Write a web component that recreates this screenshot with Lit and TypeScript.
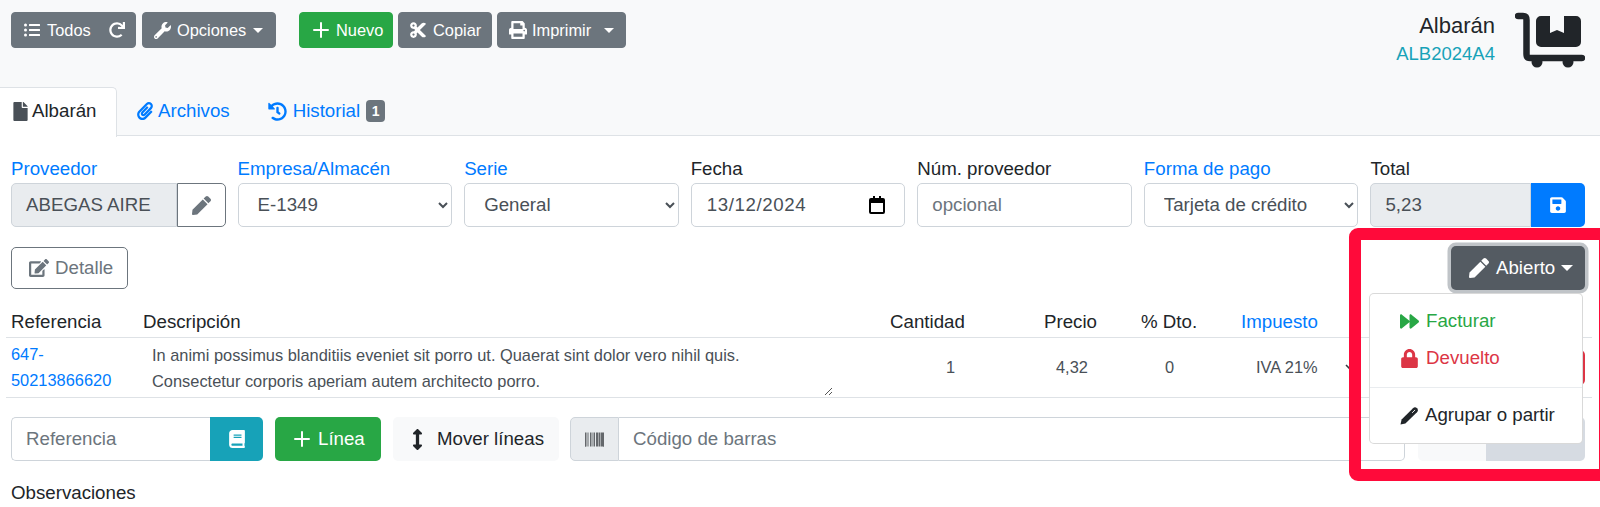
import { LitElement, html, css, svg } from "lit";
import { customElement } from "lit/decorators.js";

const P: Record<string, [number, string]> = {
  list: [512, "M48 48a48 48 0 1 0 48 48 48 48 0 0 0-48-48zm0 160a48 48 0 1 0 48 48 48 48 0 0 0-48-48zm0 160a48 48 0 1 0 48 48 48 48 0 0 0-48-48zm448 16H176a16 16 0 0 0-16 16v32a16 16 0 0 0 16 16h320a16 16 0 0 0 16-16v-32a16 16 0 0 0-16-16zm0-320H176a16 16 0 0 0-16 16v32a16 16 0 0 0 16 16h320a16 16 0 0 0 16-16V80a16 16 0 0 0-16-16zm0 160H176a16 16 0 0 0-16 16v32a16 16 0 0 0 16 16h320a16 16 0 0 0 16-16v-32a16 16 0 0 0-16-16z"],
  redo: [512, "M500.33 0h-47.41a12 12 0 0 0-12 12.57l4 82.76A247.42 247.42 0 0 0 256 8C119.34 8 8.9 119.53 8 256.19 7.1 393.07 118.1 504 256 504a247.1 247.1 0 0 0 166.18-63.91 12 12 0 0 0 .48-17.43l-34-34a12 12 0 0 0-16.38-.55A176 176 0 1 1 402.1 157.8l-101.53-4.87a12 12 0 0 0-12.57 12v47.41a12 12 0 0 0 12 12h200.33a12 12 0 0 0 12-12V12a12 12 0 0 0-12-12z"],
  wrench: [512, "M507.73 109.1c-2.24-9.03-13.54-12.09-20.12-5.51l-74.36 74.36-67.88-11.31-11.31-67.88 74.36-74.36c6.62-6.62 3.43-17.9-5.66-20.16-47.38-11.74-99.55.91-136.58 37.93-39.64 39.64-50.55 97.1-34.05 147.2L18.74 402.76c-24.99 24.99-24.99 65.51 0 90.5 24.99 24.99 65.51 24.99 90.5 0l213.21-213.21c50.12 16.71 107.47 5.68 147.37-34.22 37.07-37.07 49.7-89.32 37.91-136.73zM64 472c-13.25 0-24-10.75-24-24 0-13.26 10.75-24 24-24s24 10.74 24 24c0 13.25-10.75 24-24 24z"],
  cut: [448, "M278.06 256L444.48 89.57c4.69-4.69 4.69-12.29 0-16.97-32.8-32.8-85.99-32.8-118.79 0L210.18 188.12l-24.86-24.86c4.31-10.92 6.68-22.81 6.68-35.26 0-53.02-42.98-96-96-96S0 74.98 0 128s42.98 96 96 96c4.54 0 8.99-.32 13.36-.93L142.29 256l-32.93 32.93c-4.37-.61-8.83-.93-13.36-.93-53.02 0-96 42.98-96 96s42.98 96 96 96 96-42.98 96-96c0-12.45-2.37-24.34-6.68-35.26l24.86-24.86L325.69 439.4c32.8 32.8 85.99 32.8 118.79 0 4.69-4.68 4.69-12.28 0-16.97L278.06 256zM96 160c-17.64 0-32-14.36-32-32s14.36-32 32-32 32 14.36 32 32-14.36 32-32 32zm0 256c-17.64 0-32-14.36-32-32s14.36-32 32-32 32 14.36 32 32-14.36 32-32 32z"],
  print: [512, "M448 192V77.25c0-8.49-3.37-16.62-9.37-22.63L393.37 9.37c-6-6-14.14-9.37-22.63-9.37H96C78.33 0 64 14.33 64 32v160c-35.35 0-64 28.65-64 64v112c0 8.84 7.16 16 16 16h48v96c0 17.67 14.33 32 32 32h320c17.67 0 32-14.33 32-32v-96h48c8.84 0 16-7.16 16-16V256c0-35.35-28.65-64-64-64zm-64 256H128v-96h256v96zm0-224H128V64h192v48c0 8.84 7.16 16 16 16h48v96zm48 72c-13.25 0-24-10.75-24-24 0-13.26 10.75-24 24-24s24 10.74 24 24c0 13.25-10.75 24-24 24z"],
  file: [384, "M224 136V0H24C10.7 0 0 10.7 0 24v464c0 13.3 10.7 24 24 24h336c13.3 0 24-10.7 24-24V160H248c-13.2 0-24-10.8-24-24zm160-14.1v6.1H256V0h6.1c6.4 0 12.5 2.5 17 7l97.9 98c4.5 4.5 7 10.6 7 16.9z"],
  clip: [448, "M43.246 466.142c-58.43-60.289-57.341-157.511 1.386-217.581L254.392 34c44.316-45.332 116.351-45.336 160.671 0 43.89 44.894 43.943 117.329 0 162.276L232.214 383.128c-29.855 30.537-78.633 30.111-107.982-.998-28.275-29.97-27.368-77.473 1.452-106.953l143.743-146.835c6.182-6.314 16.312-6.422 22.626-.241l22.861 22.379c6.315 6.182 6.422 16.312.241 22.626L171.427 319.927c-4.932 5.045-5.236 13.428-.648 18.292 4.372 4.634 11.245 4.711 15.688.165l182.849-186.851c19.613-20.062 19.613-52.725-.011-72.798-19.189-19.627-49.957-19.637-69.154 0L90.39 293.295c-34.763 35.56-35.299 93.12-1.191 128.313 34.01 35.093 88.985 35.137 123.058.286l172.06-175.999c6.177-6.319 16.307-6.433 22.626-.256l22.877 22.364c6.319 6.177 6.434 16.307.256 22.626l-172.06 175.998c-59.576 60.938-155.943 60.216-214.77-.485z"],
  history: [512, "M504 255.531c.253 136.64-111.18 248.372-247.82 248.468-59.015.042-113.223-20.53-155.822-54.911-11.077-8.94-11.905-25.541-1.839-35.607l11.267-11.267c8.609-8.609 22.353-9.551 31.891-1.984C173.062 425.135 212.781 440 256 440c101.705 0 184-82.311 184-184 0-101.705-82.311-184-184-184-48.814 0-93.149 18.969-126.068 49.932l50.754 50.754c10.08 10.08 2.941 27.314-11.313 27.314H24c-8.837 0-16-7.163-16-16V38.627c0-14.254 17.234-21.393 27.314-11.314l49.372 49.372C129.209 34.136 189.552 8 256 8c136.81 0 247.747 110.78 248 247.531zm-180.912 78.784l9.823-12.63c8.138-10.463 6.253-25.542-4.21-33.679L288 256.349V152c0-13.255-10.745-24-24-24h-16c-13.255 0-24 10.745-24 24v135.651l65.409 50.874c10.463 8.137 25.541 6.253 33.679-4.21z"],
  edit: [576, "M402.6 83.2l90.2 90.2c3.8 3.8 3.8 10 0 13.8L274.4 405.6l-92.8 10.3c-12.4 1.4-22.9-9.1-21.5-21.5l10.3-92.8L388.8 83.2c3.8-3.8 10-3.8 13.8 0zm162-22.9l-48.8-48.8c-15.2-15.2-39.9-15.2-55.2 0l-35.4 35.4c-3.8 3.8-3.8 10 0 13.8l90.2 90.2c3.8 3.8 10 3.8 13.8 0l35.4-35.4c15.2-15.3 15.2-40 0-55.2zM384 346.2V448H64V128h229.8c3.2 0 6.2-1.3 8.5-3.5l40-40c7.6-7.6 2.2-20.5-8.5-20.5H48C21.5 64 0 85.5 0 112v352c0 26.5 21.5 48 48 48h352c26.5 0 48-21.5 48-48V306.2c0-10.7-12.9-16-20.5-8.5l-40 40c-2.2 2.3-3.5 5.3-3.5 8.5z"],
  save: [448, "M433.941 129.941l-83.882-83.882A48 48 0 0 0 316.118 32H48C21.49 32 0 53.49 0 80v352c0 26.51 21.49 48 48 48h352c26.51 0 48-21.49 48-48V163.882a48 48 0 0 0-14.059-33.941zM224 416c-35.346 0-64-28.654-64-64 0-35.346 28.654-64 64-64s64 28.654 64 64c0 35.346-28.654 64-64 64zm96-304.52V212c0 6.627-5.373 12-12 12H76c-6.627 0-12-5.373-12-12V108c0-6.627 5.373-12 12-12h228.52c3.183 0 6.235 1.264 8.485 3.515l3.48 3.48A11.996 11.996 0 0 1 320 111.48z"],
  forward: [512, "M500.5 231.4l-192-160C287.9 54.3 256 68.6 256 96v320c0 27.4 31.9 41.8 52.5 24.6l192-160c15.3-12.8 15.3-36.4 0-49.2zm-256 0l-192-160C31.9 54.3 0 68.6 0 96v320c0 27.4 31.9 41.8 52.5 24.6l192-160c15.3-12.8 15.3-36.4 0-49.2z"],
  lock: [448, "M400 224h-24v-72C376 68.2 307.8 0 224 0S72 68.2 72 152v72H48c-26.5 0-48 21.5-48 48v192c0 26.5 21.5 48 48 48h352c26.5 0 48-21.5 48-48V272c0-26.5-21.5-48-48-48zm-104 0H152v-72c0-39.7 32.3-72 72-72s72 32.3 72 72v72z"],
  pen: [512, "M290.74 93.24l128.02 128.02-277.99 277.99-114.14 12.6C11.35 513.54-1.56 500.62.14 485.34l12.7-114.22 277.9-277.88zm207.2-19.06l-60.11-60.11c-18.75-18.75-49.16-18.75-67.91 0l-56.55 56.55 128.02 128.02 56.55-56.55c18.75-18.76 18.75-49.16 0-67.91z"],
  book: [448, "M448 360V24c0-13.3-10.7-24-24-24H96C43 0 0 43 0 96v320c0 53 43 96 96 96h328c13.3 0 24-10.7 24-24v-16c0-7.5-3.5-14.3-8.9-18.7-4.2-15.4-4.2-59.3 0-74.7 5.4-4.3 8.9-11.1 8.9-18.6zM128 134c0-3.3 2.7-6 6-6h212c3.3 0 6 2.7 6 6v20c0 3.3-2.7 6-6 6H134c-3.3 0-6-2.7-6-6v-20zm0 64c0-3.3 2.7-6 6-6h212c3.3 0 6 2.7 6 6v20c0 3.3-2.7 6-6 6H134c-3.3 0-6-2.7-6-6v-20zm253.4 250H96c-17.7 0-32-14.3-32-32 0-17.6 14.4-32 32-32h285.4c-1.9 17.1-1.9 46.9 0 64z"],
  updown: [256, "M214.059 377.941H168V134.059h46.059c21.382 0 32.09-25.851 16.971-40.971L144.971 7.029c-9.373-9.373-24.568-9.373-33.941 0L24.971 93.088c-15.119 15.119-4.411 40.971 16.971 40.971H88v243.882H41.941c-21.382 0-32.09 25.851-16.971 40.971l86.059 86.059c9.373 9.373 24.568 9.373 33.941 0l86.059-86.059c15.12-15.119 4.412-40.971-16.97-40.971z"],
  barcode: [512, "M0 448V64h18v384H0zm26.857-.273V64H36v383.727h-9.143zm27.143 0V64h8.857v383.727H54zm44.857 0V64h8.857v383.727h-8.857zm36 0V64h17.714v383.727h-17.714zm44.857 0V64h8.857v383.727h-8.857zm18 0V64h8.857v383.727h-8.857zm18 0V64h8.857v383.727h-8.857zm35.715 0V64h18v383.727h-18zm44.857 0V64h18v383.727h-18zm35.999 0V64h18.001v383.727h-18.001zm36.001 0V64h18.001v383.727h-18.001zm26.857 0V64h18v383.727h-18zm45.143 0V64h26.857v383.727h-26.857zm35.714 0V64h9.143v383.727H476zm18 .273V64h18v384h-18z"],
};

const icon = (name: string, w: number) => {
  const [vw, d] = P[name];
  return html`<svg class="ic" style="width:${w}px;height:${w}px" viewBox="0 0 ${vw} 512" fill="currentColor" aria-hidden="true">${svg`<path d=${d}></path>`}</svg>`;
};

const plus = (s: number) => html`<svg class="ic" style="width:${s}px;height:${s}px" viewBox="0 0 16 16" aria-hidden="true">${svg`<path d="M8 1v14M1 8h14" stroke="currentColor" stroke-width="2" stroke-linecap="round" fill="none"></path>`}</svg>`;

const dolly = html`<svg class="dolly" viewBox="0 0 70 56" aria-hidden="true">${svg`
  <path d="M3 4H8Q11.5 4 11.5 8V42Q11.5 46 15 46H67" fill="none" stroke="currentColor" stroke-width="6.5" stroke-linecap="round"></path>
  <circle cx="22" cy="50" r="5.5" fill="currentColor"></circle>
  <circle cx="53" cy="50" r="5.5" fill="currentColor"></circle>
  <path fill="currentColor" d="M26 4H35V21l7-3 7 3V4h12a5 5 0 0 1 5 5v21a5 5 0 0 1-5 5H26a5 5 0 0 1-5-5V9a5 5 0 0 1 5-5z"></path>
`}</svg>`;

const slimPen = html`<svg class="ic" style="width:19px;height:19px" viewBox="0 0 19 19" aria-hidden="true">${svg`
  <path fill="currentColor" d="M.5 18.5 1.6 13.6 13 2.2a2.9 2.9 0 0 1 4 0 2.9 2.9 0 0 1 0 4L5.4 17.4z"></path>
  <path d="M12.4 6.6 14.8 4.2" stroke="#fff" stroke-width=".9" stroke-linecap="round" fill="none"></path>
`}</svg>`;

@customElement("app-root")
export class AppRoot extends LitElement {
  static styles = css`
    :host {
      display: block;
      position: relative;
      width: 1600px;
      height: 507px;
      overflow: hidden;
      background: #fff;
      color: #212529;
      font-family: "Liberation Sans", Arial, sans-serif;
      font-size: 18.7px;
      line-height: 1.5;
    }
    * { box-sizing: border-box; }
    .ic { flex: none; display: block; }
    .head { background: #f8f9fa; height: 136px; border-bottom: 1px solid #dee2e6; position: relative; }
    .top { display: flex; height: 87px; padding: 12px 15px 0 11px; align-items: flex-start; }
    .tb { display: flex; gap: 6px; }
    .tb.second { margin-left: 23px; gap: 5px; }
    .btn {
      display: flex; align-items: center; height: 36px; border-radius: 4px;
      background: #6c757d; color: #fff; font-size: 16.4px; white-space: nowrap;
      border: 1px solid #6c757d;
    }
    .btn.green { background: #28a745; border-color: #28a745; }
    .caret { width: 0; height: 0; border-left: 5.5px solid transparent; border-right: 5.5px solid transparent; border-top: 5.5px solid currentColor; flex: none; }
    .todos { width: 125px; padding-left: 12px; }
    .todos .ic:first-child { margin-right: 7px; }
    .todos .ic:last-of-type { margin-left: auto; margin-right: 10px; }
    .opc { width: 134px; padding-left: 11px; }
    .opc span { margin: 0 7px 0 6px; }
    .nuevo { width: 94px; padding-left: 13px; }
    .nuevo span { margin-left: 7px; }
    .copiar { width: 94px; padding-left: 10px; }
    .copiar span { margin-left: 6px; }
    .imp { width: 129px; padding-left: 11px; }
    .imp span { margin-left: 5px; }
    .imp .caret { margin-left: auto; margin-right: 11px; }
    .title { margin-left: auto; display: flex; gap: 20px; }
    .tt { text-align: right; padding-top: 0; }
    .tt b { display: block; font-weight: 400; font-size: 22px; line-height: 27px; }
    .tt a { display: block; color: #17a2b8; font-size: 18.5px; line-height: 29px; }
    .dolly { width: 70px; height: 56px; color: #212529; display: block; }
    .tabs { display: flex; height: 49px; position: relative; }
    .tab { display: flex; align-items: center; color: #007bff; height: 50px; padding-bottom: 2px; }
    .tab.on { width: 117px; background: #fff; color: #212529; border: 1px solid #dee2e6; border-left: 0; border-bottom: 0; border-radius: 0 5px 0 0; padding-left: 11px; gap: 2px; }
    .tab.on .ic { color: #495057; }
    .tab.ar { margin-left: 19px; gap: 4px; }
    .tab.hi { margin-left: 38px; gap: 6px; }
    .badge { background: #6c757d; color: #fff; font-size: 14px; font-weight: 700; width: 19px; height: 22px; border-radius: 4px; display: flex; align-items: center; justify-content: center; line-height: 1; }

    .form { display: grid; grid-template-columns: repeat(7, 1fr); gap: 0 12px; padding: 18px 15px 0 11px; }
    .f label { display: block; line-height: 30px; height: 29px; white-space: nowrap; }
    .blue { color: #007bff; }
    .box {
      display: flex; align-items: center; height: 44px; border: 1px solid #ced4da; border-radius: 5px;
      background: #fff; color: #495057; padding: 0 14px; font-size: 18.7px; white-space: nowrap;
    }
    .box.dis { background: #e9ecef; }
    .box.ph { color: #6c757d; }
    select.box { width: 100%; font-family: inherit; padding: 0 0 2px 15px; appearance: auto; }
    .group { display: flex; }
    .group .box { flex: 1; min-width: 0; border-radius: 5px 0 0 5px; }
    .pedit { width: 49px; height: 44px; border: 1px solid #6c757d; border-radius: 0 5px 5px 0; display: flex; align-items: center; justify-content: center; color: #6c757d; background: #fff; }
    .psave { width: 54px; height: 44px; background: #007bff; color: #fff; border-radius: 0 5px 5px 0; display: flex; align-items: center; justify-content: center; }
    .date { justify-content: space-between; padding: 0 19px 0 15px; color: #495057; letter-spacing: .6px; }
    .date .ic { color: #000; }

    .actions { display: flex; justify-content: space-between; padding: 20px 15px 0 11px; height: 76px; }
    .detalle { display: flex; align-items: center; gap: 6px; width: 117px; height: 42px; padding-left: 17px; border: 1px solid #6c757d; border-radius: 5px; color: #6c757d; background: #fff; }
    .dd { position: relative; }
    .abierto { display: flex; align-items: center; width: 134px; height: 44px; margin-top: -1px; padding-left: 18px; background: #545b62; color: #fff; border-radius: 5px; box-shadow: 0 0 0 3.5px rgba(130,138,145,.5); }
    .abierto span { margin: 0 6px 0 7px; }
    .abierto .caret { border-left-width: 6.5px; border-right-width: 6.5px; border-top-width: 6.5px; }
    .menu { position: absolute; top: 46px; right: 2px; width: 214px; height: 151px; background: #fff; border: 1px solid rgba(0,0,0,.15); border-radius: 5px; z-index: 2; padding-top: 9px; }
    .mi { display: flex; align-items: center; height: 37px; padding-left: 30px; gap: 7px; }
    .mi.g { color: #28a745; }
    .mi.r { color: #dc3545; }
    .mi.k { gap: 6px; }
    .mdiv { height: 1px; background: #e9ecef; margin: 10px 0 9px; }

    .table { margin: 0 8px 0 6px; }
    .th, .tr { display: grid; grid-template-columns: 133px 741px 140px 100px 110px 140px 1fr; }
    .th { height: 35px; align-items: center; border-bottom: 1px solid #dee2e6; padding-top: 5px; }
    .tr { height: 60px; border-bottom: 1px solid #dee2e6; align-items: center; color: #495057; font-size: 16.4px; position: relative; }
    .th div:nth-child(1), .ref { padding-left: 5px; }
    .th div:nth-child(2) { padding-left: 4px; }
    .th div:nth-child(3) { padding-left: 10px; }
    .th div:nth-child(4) { padding-left: 24px; }
    .th div:nth-child(5) { padding-left: 21px; }
    .th div:nth-child(6) { padding-left: 11px; }
    .ref { color: #007bff; font-size: 16.4px; line-height: 26px; align-self: start; padding-top: 3px; }
    .desc { padding-left: 13px; line-height: 26px; white-space: nowrap; position: relative; height: 59px; padding-top: 4px; }
    .grip { position: absolute; right: 47px; bottom: 1px; width: 9px; height: 9px; }
    .n1 { padding-left: 66px; }
    .n2 { padding-left: 36px; }
    .n3 { padding-left: 45px; }
    .n4 { padding-left: 26px; display: flex; align-items: center; gap: 27px; white-space: nowrap; }
    .del { justify-self: end; width: 40px; height: 35px; margin-right: 7px; background: #dc3545; border-radius: 5px; }

    .tools { display: flex; padding: 19px 15px 0 11px; height: 64px; }
    .refg { display: flex; width: 252px; }
    .refg .box { flex: 1; min-width: 0; border-right: 0; border-radius: 5px 0 0 5px; color: #6c757d; }
    .bk { width: 53px; height: 44px; background: #17a2b8; color: #fff; border-radius: 0 5px 5px 0; display: flex; align-items: center; justify-content: center; }
    .linea { display: flex; align-items: center; gap: 8px; width: 106px; height: 44px; margin-left: 12px; padding-left: 19px; background: #28a745; color: #fff; border-radius: 5px; }
    .mover { display: flex; align-items: center; gap: 9px; width: 166px; height: 44px; margin-left: 12px; padding-left: 14px; background: #f8f9fa; border-radius: 5px; }
    .barg { display: flex; width: 835px; margin-left: 11px; }
    .addon { width: 49px; height: 44px; background: #e9ecef; border: 1px solid #ced4da; border-radius: 5px 0 0 5px; display: flex; align-items: center; justify-content: center; color: #212529; }
    .barg .box { flex: 1; border-left: 0; border-radius: 0 5px 5px 0; color: #6c757d; }
    .tail1 { width: 68px; height: 44px; margin-left: 13px; background: #f8f9fa; border-radius: 5px 0 0 5px; }
    .tail2 { width: 99px; height: 44px; background: #d6dbe2; border-radius: 0 5px 5px 0; }
    .obs { padding: 17px 11px 0; line-height: 28px; }

    .mark { position: absolute; left: 1349px; top: 228px; width: 262px; height: 253px; border: 12.5px solid #ff0a3a; border-radius: 9px; pointer-events: none; z-index: 3; }
  `;

  render() {
    return html`
      <div class="head">
        <div class="top">
          <div class="tb">
            <div class="btn todos">${icon("list", 16)}<span>Todos</span>${icon("redo", 16)}</div>
            <div class="btn opc">${icon("wrench", 17)}<span>Opciones</span><i class="caret"></i></div>
          </div>
          <div class="tb second">
            <div class="btn green nuevo">${plus(16)}<span>Nuevo</span></div>
            <div class="btn copiar">${icon("cut", 18)}<span>Copiar</span></div>
            <div class="btn imp">${icon("print", 18)}<span>Imprimir</span><i class="caret"></i></div>
          </div>
          <div class="title">
            <div class="tt"><b>Albarán</b><a>ALB2024A4</a></div>
            ${dolly}
          </div>
        </div>
        <div class="tabs">
          <div class="tab on">${icon("file", 19)}Albarán</div>
          <div class="tab ar">${icon("clip", 18)}Archivos</div>
          <div class="tab hi">${icon("history", 19)}Historial<span class="badge">1</span></div>
        </div>
      </div>

      <div class="form">
        <div class="f">
          <label class="blue">Proveedor</label>
          <div class="group"><div class="box dis">ABEGAS AIRE</div><div class="pedit">${icon("pen", 19)}</div></div>
        </div>
        <div class="f"><label class="blue">Empresa/Almacén</label><select class="box"><option>E-1349</option></select></div>
        <div class="f"><label class="blue">Serie</label><select class="box"><option>General</option></select></div>
        <div class="f">
          <label>Fecha</label>
          <div class="box date">13/12/2024
            <svg class="ic" style="width:16px;height:18px" viewBox="0 0 16 18" aria-hidden="true">${svg`<path fill="currentColor" d="M4 0h2v2h4V0h2v2h2a2 2 0 0 1 2 2v12a2 2 0 0 1-2 2H2a2 2 0 0 1-2-2V4a2 2 0 0 1 2-2h2zM2 7v9h12V7z"></path>`}</svg>
          </div>
        </div>
        <div class="f"><label>Núm. proveedor</label><div class="box ph">opcional</div></div>
        <div class="f"><label class="blue">Forma de pago</label><select class="box"><option>Tarjeta de crédito</option></select></div>
        <div class="f">
          <label>Total</label>
          <div class="group"><div class="box dis">5,23</div><div class="psave">${icon("save", 18)}</div></div>
        </div>
      </div>

      <div class="actions">
        <div class="detalle">${icon("edit", 20)}Detalle</div>
        <div class="dd">
          <div class="abierto">${icon("pen", 20)}<span>Abierto</span><i class="caret"></i></div>
          <div class="menu">
            <div class="mi g">${icon("forward", 19)}Facturar</div>
            <div class="mi r">${icon("lock", 19)}Devuelto</div>
            <div class="mdiv"></div>
            <div class="mi k">${slimPen}Agrupar o partir</div>
          </div>
        </div>
      </div>

      <div class="table">
        <div class="th">
          <div>Referencia</div><div>Descripción</div><div>Cantidad</div><div>Precio</div><div>% Dto.</div><div class="blue">Impuesto</div><div></div>
        </div>
        <div class="tr">
          <div class="ref">647-<br />50213866620</div>
          <div class="desc">In animi possimus blanditiis eveniet sit porro ut. Quaerat sint dolor vero nihil quis.<br />Consectetur corporis aperiam autem architecto porro.
            <svg class="grip" viewBox="0 0 9 9" aria-hidden="true">${svg`<path d="M8 1 1 8M8 5 5 8" stroke="#555" stroke-width="1" fill="none"></path>`}</svg>
          </div>
          <div class="n1">1</div><div class="n2">4,32</div><div class="n3">0</div>
          <div class="n4">IVA 21%
            <svg class="ic" style="width:10px;height:6px" viewBox="0 0 10 6" aria-hidden="true">${svg`<path d="M1 1l4 4 4-4" stroke="#343a40" stroke-width="1.6" fill="none"></path>`}</svg>
          </div>
          <div class="del"></div>
        </div>
      </div>

      <div class="tools">
        <div class="refg"><div class="box">Referencia</div><div class="bk">${icon("book", 18)}</div></div>
        <div class="linea">${plus(16)}Línea</div>
        <div class="mover">${icon("updown", 21)}Mover líneas</div>
        <div class="barg"><div class="addon">${icon("barcode", 19)}</div><div class="box">Código de barras</div></div>
        <div class="tail1"></div><div class="tail2"></div>
      </div>
      <div class="obs">Observaciones</div>

      <div class="mark"></div>
    `;
  }
}
